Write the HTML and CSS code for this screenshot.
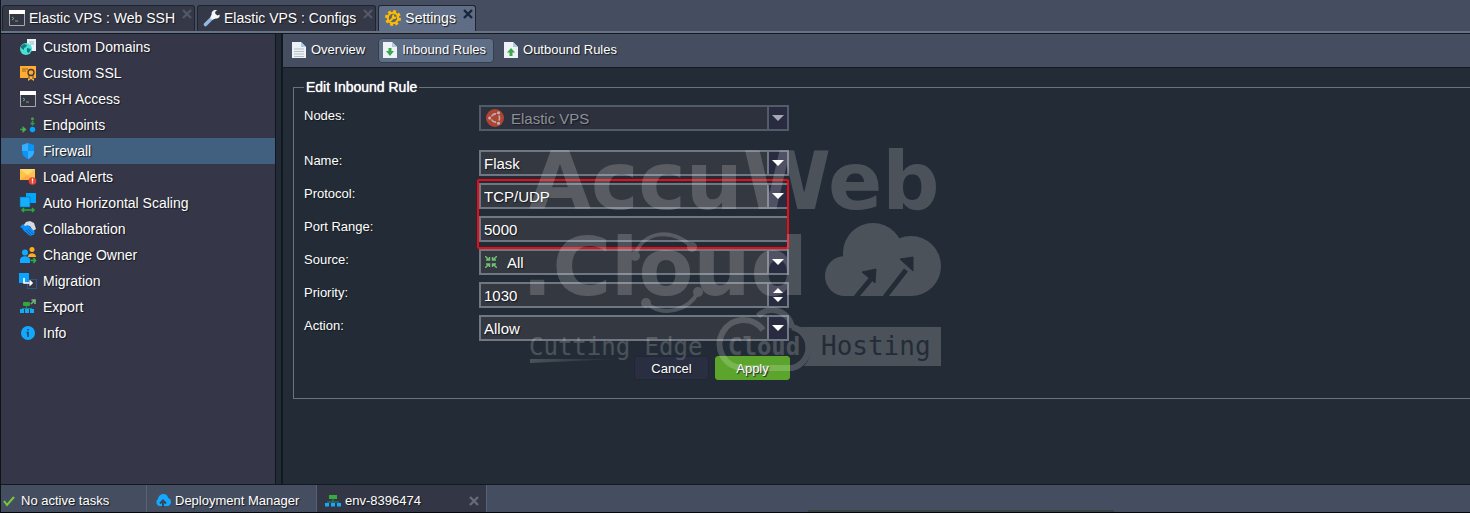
FILE: index.html
```html
<!DOCTYPE html>
<html lang="en">
<head>
<meta charset="utf-8">
<title>Settings - Elastic VPS</title>
<link rel="stylesheet" href="styles.css">
</head>
<body>
<svg class="defs" aria-hidden="true">
  <symbol id="terminal" viewBox="0 0 16 16"><path d="M1 .5h14l.5 1v14H.5v-14z" fill="#343743" stroke="#a4aaab"/><path d="M0 0h16v4H0z" fill="#fff"/><path d="M3 7l2 1.500-2 1.500M6 11h3" fill="none" stroke="#6da98e"/></symbol>
  <symbol id="close" viewBox="0 0 10 10"><path d="M1 1l8 8M9 1L1 9" fill="none" stroke="currentColor" stroke-width="2.400"/></symbol>
  <symbol id="down" viewBox="0 0 12 6"><path d="M0 0h12L6 6z" fill="currentColor"/></symbol>
</svg>

<nav class="tabs" aria-label="Open panels">
  <div class="tab"><svg class="icon"><use href="#terminal"/></svg><a href="#ssh">Elastic VPS : Web SSH</a><button class="close" aria-label="Close Web SSH"><svg><use href="#close"/></svg></button></div>
  <div class="tab"><svg class="icon" viewBox="0 0 16 16"><path d="M1.500 14.500L8 8" stroke="#91b7e5" stroke-width="3.600" stroke-linecap="round"/><path d="M7 9l2-2" stroke="#dce6f0" stroke-width="3"/><path d="M15.500 4.500l-2 1-2-1.500L11 2l2-1.700C10 -.5 7.300 1.500 7.600 4.500L6.500 7l2.500 2.500 2.700-.9c3 .2 4.600-1.900 3.800-4.100z" fill="#f5f6f8"/></svg><a href="#configs">Elastic VPS : Configs</a><button class="close" aria-label="Close Configs"><svg><use href="#close"/></svg></button></div>
  <div class="tab selected"><svg class="icon" viewBox="0 0 16 16"><circle cx="8" cy="8" r="6.700" fill="none" stroke="#ffbd00" stroke-width="2.600" stroke-dasharray="2.800 2.462"/><circle cx="8" cy="8" r="5.200" fill="#5f6472" stroke="#ffbd00" stroke-width="2"/><path d="M5 11l4-4" stroke="#ffbd00" stroke-width="2"/><path d="M11.500 6L10 7 8.800 5.800 9.700 4.300A2.400 2.400 0 0 0 7 7.500L8.500 9a2.400 2.400 0 0 0 3-3z" fill="#ffbd00"/></svg><a href="#settings" aria-current="page">Settings</a><button class="close" aria-label="Close Settings"><svg><use href="#close"/></svg></button></div>
</nav>

<div class="workspace">
  <nav class="sidebar" aria-label="Settings sections">
    <a href="#domains"><svg class="icon" viewBox="0 0 16 16"><path d="M7 0h9v12H7z" fill="#e7f4fa"/><path d="M9 3h5M10 5h4" stroke="#97b6c5"/><circle cx="6" cy="10" r="6" fill="#4bdfcf"/><path d="M1 7l3-2 3 1-1 2-2 1v2l-3-2zM7 9l4 1-2 4-2-1z" fill="#167a84"/></svg>Custom Domains</a>
    <a href="#ssl"><svg class="icon" viewBox="0 0 16 16"><path d="M0 1h16v12H0z" fill="#ffac33"/><path d="M2 4h6M2 6h4" stroke="#9a641d"/><path d="M8 9h6v7l-3-2-3 2z" fill="#ffb33d"/><circle cx="11" cy="7.500" r="3" fill="#ffac33" stroke="#3d3540" stroke-width="1.300"/><path d="M9 10v4M13 10v4" stroke="#5c4230"/></svg>Custom SSL</a>
    <a href="#access"><svg class="icon"><use href="#terminal"/></svg>SSH Access</a>
    <a href="#endpoints"><svg class="icon" viewBox="0 0 16 16"><circle cx="12.500" cy="12.500" r="2.700" fill="#00a6ff"/><circle cx="12.500" cy="1.800" r="1.600" fill="#399c49"/><path d="M12.500 4v1.500M12.500 7v1.500M10.500 6.500h4M0 12.500h3" fill="none" stroke="#399c49" stroke-width="1.600"/><path d="M2.500 9l4 3.500-4 3.500z" fill="#4daf50"/></svg>Endpoints</a>
    <a href="#firewall" class="current" aria-current="page"><svg class="icon" viewBox="0 0 16 16"><path d="M8 0l6 2v6c0 4-2.500 6.500-6 8-3.500-1.500-6-4-6-8V2z" fill="#0794fb"/><path d="M8 0L2 2v6h6zM8 8h6c0 4-2.500 6.500-6 8z" fill="#39aefe"/></svg>Firewall</a>
    <a href="#alerts"><svg class="icon" viewBox="0 0 16 16"><path d="M0 0h15v11H0z" fill="#ffc34d"/><path d="M0 0l7.500 6L15 0" fill="#ffda71"/><path d="M0 11l7-5 8 5z" fill="#ffad3d"/><circle cx="12.500" cy="12" r="3.800" fill="#e74436"/><path d="M12.500 9.500v3M12.500 13.300v1" stroke="#fff" stroke-width="1.300"/></svg>Load Alerts</a>
    <a href="#scaling"><svg class="icon tall" viewBox="0 0 16 20"><path d="M6 0h10v10H6z" fill="#00a7fc"/><path d="M0 4h10v10H0z" fill="#17aefe" stroke="#086d9e" stroke-width=".6"/><path d="M2 17h12M4 15l-2 2 2 2M12 15l2 2-2 2" fill="none" stroke="#25ad39" stroke-width="1.500"/></svg>Auto Horizontal Scaling</a>
    <a href="#collaboration"><svg class="icon" viewBox="0 0 16 16"><path d="M3 5l3-4 4-1 4 2 2 6-3 2-3-5-5 2z" fill="#d6d9dd"/><path d="M0 6l3-3 2 2 3-1 2 2 5 5-1 2 0 1-2 0-1 1-2-1-5-4-2-3z" fill="#078fff"/><path d="M8 8l5 5M6 9l5 5M5 11l4 4" stroke="#2b4a70" stroke-width=".7"/></svg>Collaboration</a>
    <a href="#owner"><svg class="icon" viewBox="0 0 16 16"><circle cx="12" cy="2.500" r="2.500" fill="#ffad1d"/><path d="M8 10c0-5 8-5 8 0z" fill="#ffad1d"/><circle cx="5" cy="5.500" r="3" fill="#12a9fe"/><path d="M0 16v-3c0-5 10-5 10 0v3z" fill="#12a9fe"/><path d="M10.500 13.500h5M13.500 11l2 2.500-2 2.500" fill="none" stroke="#2cb344" stroke-width="1.500"/></svg>Change Owner</a>
    <a href="#migration"><svg class="icon" viewBox="0 0 16 16"><path d="M-1 0h10v10H-1z" fill="#0ba5ff"/><path d="M7.500 6.500h9v9h-9z" fill="none" stroke="#267bb8" stroke-dasharray="1 1"/><path d="M4 5v5h8M9.500 7.500L12 10l-2.500 2.500" fill="none" stroke="#fff" stroke-width="1.600"/></svg>Migration</a>
    <a href="#export"><svg class="icon" viewBox="0 0 16 16"><rect x="3" y="3" width="7" height="4" rx="1" fill="#36a53b"/><path d="M6.500 7v3M2 9.500h10" stroke="#168e75"/><path d="M0 10h4v4H0zM5 10h4v4H5zM10 10h4v4h-4z" fill="#12a9fe"/><path d="M11 5l4-4M11.500 1H15v4" fill="none" stroke="#70b778" stroke-width="1.600"/></svg>Export</a>
    <a href="#info"><svg class="icon" viewBox="0 0 16 16"><circle cx="8" cy="8" r="7" fill="#11a9ff"/><path d="M8 4v1.500M6.500 7.500H8V12" fill="none" stroke="#304155" stroke-width="1.600"/></svg>Info</a>
  </nav>

  <main class="content">
    <nav class="toolbar" aria-label="Firewall">
      <a href="#overview"><svg class="page-icon" viewBox="0 0 14 16"><path d="M0 0h9l5 5v11H0z" fill="#ecf2f5"/><path d="M9 0v5h5z" fill="#a9cce5"/><path d="M2 7h10M2 9.500h10M2 12h10M2 14.500h10" stroke="#b5bec5"/></svg>Overview</a>
      <a href="#inbound" class="chosen" aria-current="page"><svg class="page-icon" viewBox="0 0 14 16"><path d="M0 0h9l5 5v11H0z" fill="#ecf2f5"/><path d="M9 0v5h5z" fill="#b0cbd9"/><path d="M5.500 6h3v3H11l-4 5-4-5h2.500z" fill="#3ba84b"/></svg>Inbound Rules</a>
      <a href="#outbound"><svg class="page-icon" viewBox="0 0 14 16"><path d="M0 0h9l5 5v11H0z" fill="#ecf2f5"/><path d="M9 0v5h5z" fill="#b0cbd9"/><path d="M7 6l4 4.500H8.500V14h-3v-3.500H3z" fill="#3ba84b"/></svg>Outbound Rules</a>
    </nav>
    <form class="panel">
      <fieldset>
        <legend>Edit Inbound Rule</legend>
        <div class="row nodes"><label for="nodes">Nodes:</label>
          <div class="field disabled with-node"><select id="nodes" disabled><option>Elastic VPS</option></select><svg class="node-icon" viewBox="0 0 18 18"><circle cx="9" cy="9" r="9" fill="#af4432"/><circle cx="9.500" cy="9" r="4" fill="none" stroke="#b5aaae" stroke-width="1.800"/><path d="M9.500 9L3 9M9.500 9l3.500 6M9.500 9L13 3" stroke="#af4432" stroke-width="3"/><circle cx="9.500" cy="9" r="2.800" fill="#af4432"/><g fill="#c1b5b8"><circle cx="3.600" cy="9" r="1.500"/><circle cx="12.500" cy="3.700" r="1.500"/><circle cx="12.500" cy="14.300" r="1.500"/></g></svg><span class="trigger"><svg><use href="#down"/></svg></span></div></div>
        <div class="row"><label for="name">Name:</label><div class="field"><input id="name" value="Flask"><span class="trigger"><svg><use href="#down"/></svg></span></div></div>
        <div class="highlight">
          <div class="row"><label for="protocol">Protocol:</label><div class="field"><select id="protocol"><option>TCP/UDP</option></select><span class="trigger"><svg><use href="#down"/></svg></span></div></div>
          <div class="row"><label for="port">Port Range:</label><div class="field"><input id="port" value="5000"></div></div>
        </div>
        <div class="row"><label for="source">Source:</label><div class="field with-source"><select id="source"><option>All</option></select><svg class="source-icon" viewBox="0 0 12 12"><path d="M0 0l4 4M1 4h3.500V1M12 0L8 4M11 4H7.500V1M0 12l4-4M1 8h3.500v3M12 12L8 8M11 8H7.500v3" fill="none" stroke="#70bd76" stroke-width="1.500"/></svg><span class="trigger"><svg><use href="#down"/></svg></span></div></div>
        <div class="row"><label for="priority">Priority:</label><div class="field"><input id="priority" value="1030" inputmode="numeric"><span class="trigger spinner"><svg class="up"><use href="#down"/></svg><svg><use href="#down"/></svg></span></div></div>
        <div class="row"><label for="action">Action:</label><div class="field"><select id="action"><option>Allow</option></select><span class="trigger"><svg><use href="#down"/></svg></span></div></div>
        <div class="actions"><button type="button">Cancel</button><button type="button" class="apply">Apply</button></div>
      </fieldset>
    </form>
  </main>
</div>

<footer class="taskbar">
  <div class="task status"><svg class="check" viewBox="0 0 12 12"><path d="M1 6l3 4 7-8" fill="none" stroke="#78c83b" stroke-width="2"/></svg><span>No active tasks</span></div>
  <div class="task"><svg class="icon" viewBox="0 0 16 14"><path d="M4 12a4 4 0 0 1-1-7c1-7 10-6 10-1 4 1 4 7 0 8z" fill="#12a9fe"/><path d="M8 14V7M5 9.500l3-3 3 3" fill="none" stroke="#37475d" stroke-width="2"/></svg><a href="#deployment">Deployment Manager</a></div>
  <div class="task active"><svg class="icon" viewBox="0 0 16 14"><path d="M4 1h8v4H4z" fill="#35ac3d"/><path d="M8 5v3M2 8h12" stroke="#258969"/><path d="M0 9h4v3.500H0zM6 9h4v3.500H6zM12 9h4v3.500h-4z" fill="#12a9fe"/></svg><a href="#env">env-8396474</a><button class="close" aria-label="Close env-8396474"><svg><use href="#close"/></svg></button></div>
  <div class="scroll-hint"></div>
</footer>

<svg class="watermark" viewBox="0 0 412 234" role="img" aria-label="AccuWeb.Cloud, Cutting Edge Cloud Hosting">
  <defs><linearGradient id="fade"><stop offset="0" stop-color="#fff"/><stop offset="1" stop-color="#fff" stop-opacity="0"/></linearGradient></defs>
  <g class="mark">
    <text class="brand" x="-1" y="70">AccuWeb</text>
    <text class="brand" x="-8" y="156">.Cloud</text>
    <g fill="none" stroke="#fff" stroke-width="4"><path d="M105 117C112 92 142 88 162 108M116 164C134 179 159 171 168 153"/></g>
    <circle cx="105" cy="117" r="5"/><circle cx="162" cy="108" r="5"/><circle cx="116" cy="164" r="5"/><circle cx="168" cy="153" r="5"/>
    <circle cx="343" cy="114" r="30"/><circle cx="381" cy="127" r="30"/><circle cx="315" cy="137" r="20"/><path d="M315 125h66v32h-66z"/>
    <text class="tagline" x="-1" y="216">Cutting Edge</text><path d="M0 220h90l-90 4z" fill="url(#fade)"/>
    <path d="M233 191A24 24 0 1 0 212 229H262A21 21 0 0 0 262 188M228 177A20 20 0 0 1 262 189" fill="none" stroke="#fff" stroke-width="6"/>
    <text class="tagline strong" x="198" y="216">Cloud</text>
    <path d="M270 188H411V227H274A26 26 0 0 0 270 188z"/>
  </g>
  <g class="cutout"><path d="M326 158l15-18M355 158l21-27" stroke-width="5"/><path d="M346 130l-14 3 13 11zM383 118l-13 2 13 12z"/><text class="hosting" x="291" y="216">Hosting</text></g>
</svg>
</body>
</html>
```

FILE: styles.css
```css
* { box-sizing: border-box; }
body { margin: 0; height: 100vh; display: flex; flex-direction: column; position: relative; overflow: hidden; background: #454e60; border-left: 1px solid #101419; border-bottom: 1px solid #050609; color: #fff; font: 14px/20px "Liberation Sans", Arial, sans-serif; text-shadow: 1px 1px 1px #15191f; }
a { color: inherit; text-decoration: none; }
button, input, select { font: inherit; color: inherit; text-shadow: inherit; }
svg { display: block; flex: none; }
.defs { position: absolute; width: 0; height: 0; }
.icon { width: 16px; height: 16px; overflow: visible; }

.tabs { display: flex; gap: 2px; padding: 5px 1px 0; border-bottom: 2px solid #687285; }
.tab { display: flex; align-items: center; gap: 4px; height: 26px; padding: 0 2px 1px 6px; border: 1px solid #20242e; border-bottom: 0; border-radius: 3px 3px 0 0; background: #353846; }
.tab.selected { background: #5f6e86; }
.close { align-self: flex-start; margin: 3px 0 0 3px; padding: 0; border: 0; background: none; color: #525866; }
.close svg { width: 10px; height: 10px; }
.tab.selected .close { color: #18253b; }

.workspace { flex: 1; min-height: 0; display: flex; border-top: 1px solid #11181f; background: #222b35; }
.sidebar { width: 275px; flex: none; background: #353748; border-right: 1px solid #11171f; }
.sidebar a { display: flex; align-items: center; gap: 7px; height: 26px; padding-left: 19px; }
.sidebar .current { background: #41607f; }
.icon.tall { height: 20px; }
.content { flex: 1; min-width: 0; margin-left: 5px; border-left: 2px solid #11181f; background: #232c36; }
.toolbar { display: flex; align-items: center; gap: 8px; height: 34px; padding: 0 0 1px 4px; background: #454e60; border-bottom: 1px solid #151b24; font-size: 13px; }
.toolbar a { display: flex; align-items: center; gap: 5px; height: 25px; padding: 0 4px; border: 1px solid transparent; border-radius: 4px; }
.toolbar .chosen { margin-right: -3px; padding-right: 7px; background: #5e6e87; border-color: #353e4d; }
.page-icon { width: 14px; height: 16px; }

.panel { padding: 11px 0 0 10px; }
fieldset { min-width: 0; margin: 0; padding: 10px 0 18px 10px; border: 1px solid #69727d; border-right: 0; }
legend { padding: 0 2px; line-height: 16px; text-shadow: 0 0 1px #fff; }
.row { display: grid; grid-template-columns: 175px 310px; width: fit-content; margin-bottom: 7px; }
.row.nodes { margin-bottom: 19px; }
.row > label { font-size: 13px; line-height: 22px; }
.field { display: grid; grid-template-columns: 1fr 20px; height: 26px; border: 2px solid #6f7783; background: #343840; font-size: 15px; }
.field input, .field select { grid-area: 1 / 1 / 2 / 3; width: 100%; min-width: 0; height: 22px; padding: 2px 22px 0 3px; border: 0; border-radius: 0; background: none; appearance: none; outline-offset: -1px; opacity: 1; }
.field input { padding-top: 1px; }
.field.disabled { background: #2c313d; border-color: #525b68; color: #8d9099; }
.field.with-node select { padding-left: 30px; }
.field.with-source select { padding-left: 26px; }
.node-icon { grid-area: 1 / 1; align-self: center; width: 18px; height: 18px; margin-left: 5px; pointer-events: none; }
.source-icon { grid-area: 1 / 1; align-self: center; width: 12px; height: 12px; margin-left: 4px; pointer-events: none; }
.trigger { grid-area: 1 / 2; display: grid; place-content: center; gap: 4px; border-left: 2px solid #6f7783; background: #292c40; color: #fff; pointer-events: none; }
.disabled .trigger { border-color: #525b68; color: #a7a8b6; }
.trigger svg { width: 12px; height: 6px; }
.trigger.spinner svg { width: 10px; height: 5px; }
.up { transform: rotate(180deg); }
.highlight { position: relative; width: fit-content; }
.highlight::after { content: ""; position: absolute; inset: -4px 0 -7px 173px; border: 2px solid #e90c17; border-radius: 2px; pointer-events: none; }
.actions { display: flex; justify-content: flex-end; gap: 6px; width: 486px; margin-top: 15px; }
.actions button { width: 75px; height: 24px; padding: 1px 0 0; border: 1px solid #222536; border-radius: 3px; background: #292e41; font-size: 13px; }
.actions .apply { border-color: #5ba52d; background: #5ba52d; }

.taskbar { display: flex; position: relative; height: 28px; border-top: 1px solid #131921; font-size: 13px; }
.task { display: flex; align-items: center; gap: 4px; width: 170px; padding: 4px 7px 0 8px; border-right: 1px solid #596275; }
.task .icon { height: 14px; }
.task.status { width: 146px; gap: 6px; padding-left: 2px; }
.check { width: 12px; height: 12px; }
.task.active { background: #333644; }
.task .close { align-self: center; margin: 0 0 0 auto; color: #666b78; }
.scroll-hint { align-self: flex-end; width: 306px; height: 2px; margin-left: 321px; background: #394046; }

.watermark { position: absolute; top: 50%; left: 50%; width: 412px; height: 234px; translate: -50% -50%; overflow: visible; pointer-events: none; text-shadow: none; }
.mark { fill: #fff; opacity: .18; }
.brand { font: bold 80px "DejaVu Sans", sans-serif; }
.tagline { font: 24px "DejaVu Sans Mono", monospace; }
.tagline.strong { font-weight: bold; }
.cutout { fill: #232c36; stroke: none; }
.cutout path { stroke: #232c36; }
.hosting { font: 26px "DejaVu Sans Mono", monospace; }
```
